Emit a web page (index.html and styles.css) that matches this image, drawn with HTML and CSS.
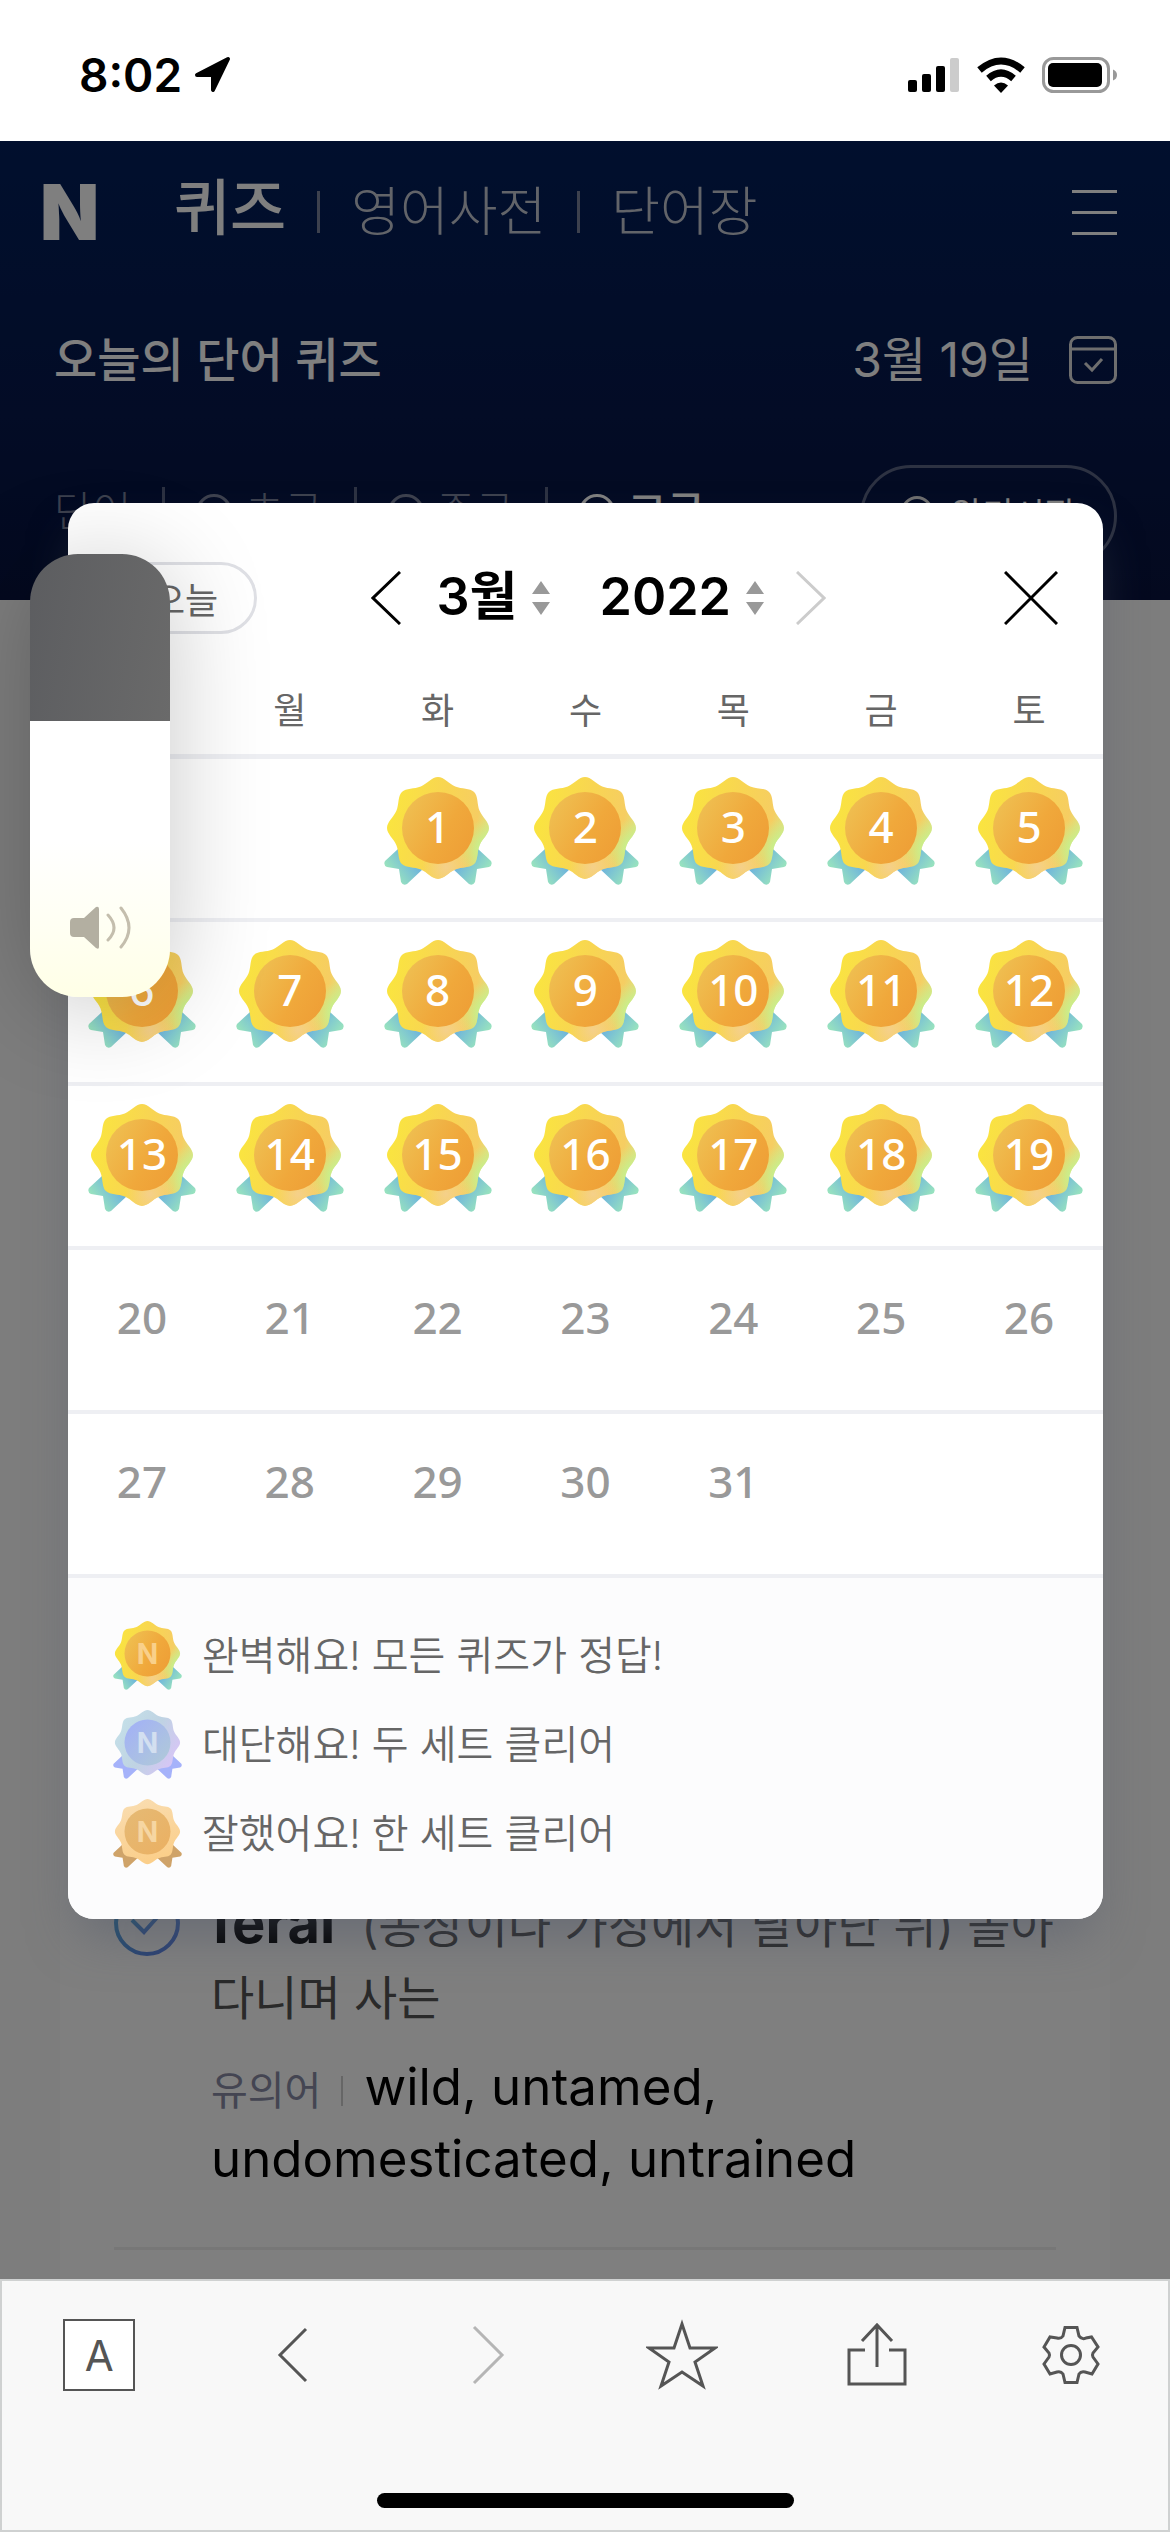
FILE: index.html
```html
<!DOCTYPE html>
<html lang="ko">
<head>
<meta charset="utf-8">
<meta name="viewport" content="width=device-width, initial-scale=1">
<title>오늘의 단어 퀴즈</title>
<link rel="stylesheet" href="styles.css">
</head>
<body>

<svg class="defs" aria-hidden="true">
  <defs>
    <linearGradient id="seal-gold" x1="0" y1="0.4" x2="1" y2="0.6">
      <stop offset="0" stop-color="#fae53f"/>
      <stop offset="0.5" stop-color="#f8d552"/>
      <stop offset="0.85" stop-color="#f6cd62"/>
      <stop offset="1" stop-color="#d9e584"/>
    </linearGradient>
    <radialGradient id="seal-gold-green" gradientUnits="userSpaceOnUse" cx="102" cy="72" r="30">
      <stop offset="0" stop-color="#bff593"/>
      <stop offset="1" stop-color="#bff593" stop-opacity="0"/>
    </radialGradient>
    <radialGradient id="seal-gold-peach" gradientUnits="userSpaceOnUse" cx="62" cy="90" r="24">
      <stop offset="0" stop-color="#f5d08a"/>
      <stop offset="1" stop-color="#f5d08a" stop-opacity="0"/>
    </radialGradient>
    <linearGradient id="disc-gold" x1="0" y1="0.2" x2="1" y2="0.8">
      <stop offset="0" stop-color="#efc052"/>
      <stop offset="0.6" stop-color="#f0a83b"/>
      <stop offset="1" stop-color="#ee9e36"/>
    </linearGradient>
    <linearGradient id="ribbon-gold-l" x1="1" y1="0.2" x2="0.1" y2="0.8">
      <stop offset="0.25" stop-color="#6fb5dc"/>
      <stop offset="0.95" stop-color="#9de8bb"/>
    </linearGradient>
    <linearGradient id="ribbon-gold-r" x1="0" y1="0.2" x2="0.9" y2="0.8">
      <stop offset="0.25" stop-color="#6fb5dc"/>
      <stop offset="0.95" stop-color="#9de8bb"/>
    </linearGradient>
    <linearGradient id="seal-silver" x1="0" y1="0" x2="1" y2="0.6">
      <stop offset="0" stop-color="#c6e3ea"/>
      <stop offset="0.6" stop-color="#bfd3e3"/>
      <stop offset="1" stop-color="#d6c6f5"/>
    </linearGradient>
    <linearGradient id="disc-silver" x1="0" y1="0" x2="1" y2="1">
      <stop offset="0.1" stop-color="#a3b2f5"/>
      <stop offset="0.9" stop-color="#afc8da"/>
    </linearGradient>
    <linearGradient id="seal-bronze" x1="0" y1="0" x2="0.3" y2="1">
      <stop offset="0" stop-color="#f9deb4"/>
      <stop offset="1" stop-color="#fbcf8b"/>
    </linearGradient>
    <linearGradient id="disc-bronze" x1="0" y1="0" x2="1" y2="1">
      <stop offset="0" stop-color="#e5ba75"/>
      <stop offset="1" stop-color="#ebb062"/>
    </linearGradient>
    <linearGradient id="check" x1="0" y1="0" x2="1" y2="1">
      <stop offset="0" stop-color="#3fa8d8"/>
      <stop offset="1" stop-color="#5c7ce8"/>
    </linearGradient>
    <path id="seal" d="M54 0C60 0 64.7 6.7 71.2 9.4C77.7 12.1 85.9 10.7 90.1 14.9C94.3 19.1 92.9 27.3 95.6 33.8C98.3 40.3 105 45 105 51C105 57 98.3 61.7 95.6 68.2C92.9 74.7 94.3 82.9 90.1 87.1C85.9 91.3 77.7 89.9 71.2 92.6C64.7 95.3 60 102 54 102C48 102 43.3 95.3 36.8 92.6C30.3 89.9 22.1 91.3 17.9 87.1C13.7 82.9 15.1 74.7 12.4 68.2C9.7 61.7 3 57 3 51C3 45 9.7 40.3 12.4 33.8C15.1 27.3 13.7 19.1 17.9 14.9C22.1 10.7 30.3 12.1 36.8 9.4C43.3 6.7 48 0 54 0Z"/>
    <path id="ribbon-l" d="M14 72L1 84Q-1 88 3 90L15 92L17 105Q19 109 23 107L39 92L28 76Z"/>
    <path id="ribbon-r" d="M94 72L107 84Q109 88 105 90L93 92L91 105Q89 109 85 107L69 92L80 76Z"/>
    <symbol id="badge-gold" viewBox="0 0 108 108">
      <use href="#ribbon-l" fill="url(#ribbon-gold-l)"/>
      <use href="#ribbon-r" fill="url(#ribbon-gold-r)"/>
      <use href="#seal" fill="url(#seal-gold)"/>
      <use href="#seal" fill="url(#seal-gold-green)"/>
      <use href="#seal" fill="url(#seal-gold-peach)"/>
      <circle cx="54" cy="51" r="36" fill="url(#disc-gold)"/>
    </symbol>
    <symbol id="badge-silver" viewBox="0 0 108 108">
      <use href="#ribbon-l" fill="#a5b2fa"/>
      <use href="#ribbon-r" fill="#a5b2fa"/>
      <use href="#seal" fill="url(#seal-silver)"/>
      <circle cx="54" cy="51" r="36" fill="url(#disc-silver)"/>
    </symbol>
    <symbol id="badge-bronze" viewBox="0 0 108 108">
      <use href="#ribbon-l" fill="#cfa369"/>
      <use href="#ribbon-r" fill="#cfa369"/>
      <use href="#seal" fill="url(#seal-bronze)"/>
      <circle cx="54" cy="51" r="36" fill="url(#disc-bronze)"/>
    </symbol>
    <symbol id="sorter" viewBox="0 0 18 34">
      <path d="M9 0L18 13H0ZM9 34L18 21H0Z" fill="#999"/>
    </symbol>
  </defs>
</svg>

<div class="status-bar">
  <div class="status-left">
    <span class="time">8:02</span>
    <svg width="38" height="38" viewBox="0 0 38 38"><path d="M34 3L19 34V19H3Z" stroke="#000" stroke-width="4" stroke-linejoin="round"/></svg>
  </div>
  <div class="status-right">
    <svg width="52" height="36" viewBox="0 0 52 36">
      <rect x="0" y="23" width="9" height="12" rx="2"/>
      <rect x="14" y="17" width="9" height="18" rx="2"/>
      <rect x="28" y="9" width="9" height="26" rx="2"/>
      <rect x="42" y="1" width="9" height="34" rx="2" fill="#ccc"/>
    </svg>
    <svg width="50" height="36" viewBox="0 0 50 36">
      <path d="M25 36L18 28.500Q25 22.500 32 28.500Z"/>
      <path d="M12.500 21.500Q25 10.500 37.500 21.500M3.500 13Q25 -5 46.500 13" fill="none" stroke="#000" stroke-width="7"/>
    </svg>
    <svg width="76" height="36" viewBox="0 0 76 36">
      <rect x="1.500" y="1.500" width="65" height="33" rx="10" fill="none" stroke="#999" stroke-width="3"/>
      <rect x="6" y="6" width="54" height="24" rx="5"/>
      <path d="M71 12.500Q75 14 75 18T71 23.500Z" fill="#999"/>
    </svg>
  </div>
</div>

<div class="page">
  <header class="header">
    <div class="gnb">
      <a class="logo" href="#">N</a>
      <nav class="gnb-nav">
        <a class="current" href="#">퀴즈</a>
        <a href="#">영어사전</a>
        <a href="#">단어장</a>
      </nav>
      <button class="menu" aria-label="메뉴">
        <svg width="45" height="45" viewBox="0 0 45 45"><path d="M0 1.500H45M0 22.500H45M0 43.500H45" stroke="#fff" stroke-width="3"/></svg>
      </button>
    </div>
    <div class="title-row">
      <h1>오늘의 단어 퀴즈</h1>
      <span class="date">3월 19일</span>
      <button aria-label="달력">
        <svg width="48" height="48" viewBox="0 0 48 48" fill="none" stroke="#ddd" stroke-width="3"><rect x="1.500" y="1.500" width="45" height="45" rx="7"/><path d="M2 13H46M16 27L23 34L33 23"/></svg>
      </button>
    </div>
    <div class="level-row">
      <div class="levels">
        <span>단어</span>
        <label><input type="radio" name="level">초급</label>
        <label><input type="radio" name="level">중급</label>
        <label class="on"><input type="radio" name="level">고급</label>
      </div>
      <button class="memorize"><i></i>암기시작</button>
    </div>
  </header>

  <main class="card">
    <article class="word">
      <svg width="66" height="66" viewBox="0 0 66 66" fill="none" stroke="url(#check)" stroke-width="4"><circle cx="33" cy="33" r="31"/><path d="M18 30L30 42L48 22"/></svg>
      <div class="word-body">
        <p class="mean"><strong>feral</strong>(농장이나 가정에서 달아난 뒤) 돌아다니며 사는</p>
        <p class="synonym"><span>유의어</span>wild, untamed, undomesticated, untrained</p>
      </div>
    </article>
  </main>

  <div class="dimmed"></div>

  <section class="calendar" role="dialog" aria-label="퀴즈 달력">
    <div class="calendar-head">
      <button class="today">오늘</button>
      <div class="picker">
        <button aria-label="이전 달"><svg width="30" height="54" viewBox="0 0 30 54"><path d="M29 1L2 27L29 53" fill="none" stroke="#000" stroke-width="3"/></svg></button>
        <label class="field"><select class="month" aria-label="월"><option>3월</option></select><svg width="18" height="34"><use href="#sorter"/></svg></label>
        <label class="field"><select class="year" aria-label="연도"><option>2022</option></select><svg width="18" height="34"><use href="#sorter"/></svg></label>
        <button aria-label="다음 달"><svg width="30" height="54" viewBox="0 0 30 54"><path d="M1 1L28 27L1 53" fill="none" stroke="#ccc" stroke-width="3"/></svg></button>
      </div>
      <button class="close" aria-label="닫기"><svg width="54" height="54" viewBox="0 0 54 54"><path d="M1 1L53 53M53 1L1 53" stroke="#000" stroke-width="3"/></svg></button>
    </div>

    <table class="month-table">
      <thead>
        <tr><th>일</th><th>월</th><th>화</th><th>수</th><th>목</th><th>금</th><th>토</th></tr>
      </thead>
      <tbody>
        <tr>
          <td></td>
          <td></td>
          <td><div class="day"><svg><use href="#badge-gold"/></svg><span>1</span></div></td>
          <td><div class="day"><svg><use href="#badge-gold"/></svg><span>2</span></div></td>
          <td><div class="day"><svg><use href="#badge-gold"/></svg><span>3</span></div></td>
          <td><div class="day"><svg><use href="#badge-gold"/></svg><span>4</span></div></td>
          <td><div class="day"><svg><use href="#badge-gold"/></svg><span>5</span></div></td>
        </tr>
        <tr>
          <td><div class="day"><svg><use href="#badge-gold"/></svg><span>6</span></div></td>
          <td><div class="day"><svg><use href="#badge-gold"/></svg><span>7</span></div></td>
          <td><div class="day"><svg><use href="#badge-gold"/></svg><span>8</span></div></td>
          <td><div class="day"><svg><use href="#badge-gold"/></svg><span>9</span></div></td>
          <td><div class="day"><svg><use href="#badge-gold"/></svg><span>10</span></div></td>
          <td><div class="day"><svg><use href="#badge-gold"/></svg><span>11</span></div></td>
          <td><div class="day"><svg><use href="#badge-gold"/></svg><span>12</span></div></td>
        </tr>
        <tr>
          <td><div class="day"><svg><use href="#badge-gold"/></svg><span>13</span></div></td>
          <td><div class="day"><svg><use href="#badge-gold"/></svg><span>14</span></div></td>
          <td><div class="day"><svg><use href="#badge-gold"/></svg><span>15</span></div></td>
          <td><div class="day"><svg><use href="#badge-gold"/></svg><span>16</span></div></td>
          <td><div class="day"><svg><use href="#badge-gold"/></svg><span>17</span></div></td>
          <td><div class="day"><svg><use href="#badge-gold"/></svg><span>18</span></div></td>
          <td><div class="day"><svg><use href="#badge-gold"/></svg><span>19</span></div></td>
        </tr>
        <tr class="future">
          <td><div class="day"><span>20</span></div></td>
          <td><div class="day"><span>21</span></div></td>
          <td><div class="day"><span>22</span></div></td>
          <td><div class="day"><span>23</span></div></td>
          <td><div class="day"><span>24</span></div></td>
          <td><div class="day"><span>25</span></div></td>
          <td><div class="day"><span>26</span></div></td>
        </tr>
        <tr class="future">
          <td><div class="day"><span>27</span></div></td>
          <td><div class="day"><span>28</span></div></td>
          <td><div class="day"><span>29</span></div></td>
          <td><div class="day"><span>30</span></div></td>
          <td><div class="day"><span>31</span></div></td>
          <td></td>
          <td></td>
        </tr>
      </tbody>
    </table>

    <ul class="legend">
      <li><svg viewBox="0 0 108 108"><use href="#badge-gold"/><text x="54" y="67" fill="#f9d08a">N</text></svg>완벽해요! 모든 퀴즈가 정답!</li>
      <li><svg viewBox="0 0 108 108"><use href="#badge-silver"/><text x="54" y="67" fill="#d3dff0">N</text></svg>대단해요! 두 세트 클리어</li>
      <li><svg viewBox="0 0 108 108"><use href="#badge-bronze"/><text x="54" y="67" fill="#f6d6a2">N</text></svg>잘했어요! 한 세트 클리어</li>
    </ul>
  </section>

  <div class="volume">
    <input type="range" min="0" max="100" value="62" aria-label="음량">
    <svg width="62" height="44" viewBox="0 0 62 44">
      <path d="M4 12H14L26 1Q29 0 29 3V41Q29 44 26 42L14 31H4Q0 31 0 27V16Q0 12 4 12Z" fill="#b3afa1"/>
      <path d="M38 9Q50 22 38 34M51 2Q67 22 51 41" fill="none" stroke="#c4bead" stroke-width="3" stroke-linecap="round"/>
    </svg>
  </div>
</div>

<footer class="toolbar">
  <div class="tools">
    <button class="reader" aria-label="보기 설정">A</button>
    <button aria-label="뒤로"><svg width="72" height="72" viewBox="0 0 72 72"><path d="M49 10L23 36L49 62"/></svg></button>
    <button aria-label="앞으로" class="off"><svg width="72" height="72" viewBox="0 0 72 72"><path d="M22 8L50 36L22 64"/></svg></button>
    <button aria-label="즐겨찾기"><svg width="72" height="72" viewBox="0 0 72 72"><path d="M36 5L44 29H69L49 43L57 67L36 53L15 67L23 43L3 29H28Z"/></svg></button>
    <button aria-label="공유"><svg width="72" height="72" viewBox="0 0 72 72"><path d="M25 31H9V65H65V31H49M37 48V6M22 22L37 6L52 22"/></svg></button>
    <button aria-label="설정"><svg width="72" height="72" viewBox="0 0 72 72"><circle cx="36" cy="36" r="9.500"/><path d="M30 8.500H42L44 17Q47 21 51 19L56.500 18L63 28L58 34Q57 36 58 38L63 45L57 55L50 53Q46 52 44 55L42 63.500H30L28 55Q26 52 22 53L15 55L9 45L14 38Q15 36 14 34L9 28L15 18L22 19Q26 20 28 17Z"/></svg></button>
  </div>
  <div class="home-indicator"></div>
</footer>

</body>
</html>
```
FILE: styles.css
```css
* {
  box-sizing: border-box;
}

body {
  display: flex;
  flex-direction: column;
  min-height: 100vh;
  margin: 0;
  background: #fff;
  color: #000;
  font-family: Inter, "Noto Sans CJK KR", sans-serif;
}

h1, p, ul {
  margin: 0;
  padding: 0;
}

a {
  color: inherit;
  text-decoration: none;
}

button {
  padding: 0;
  border: 0;
  background: none;
  color: inherit;
  font: inherit;
}

svg {
  display: block;
  flex: none;
}

.defs {
  position: absolute;
  width: 0;
  height: 0;
}

/* status bar */
.status-bar {
  display: flex;
  align-items: center;
  justify-content: space-between;
  height: 141px;
  padding: 8px 52px 0 79px;
}

.status-left {
  display: flex;
  align-items: center;
  gap: 12px;
}

.time {
  font-size: 46px;
  font-weight: 600;
  line-height: 56px;
}

.status-right {
  display: flex;
  align-items: center;
  gap: 16px;
}

/* page header */
.page {
  position: relative;
  flex: 1;
  overflow: hidden;
  background: #fbfbfb;
}

.header {
  height: 459px;
  padding: 0 53px 0 54px;
  background: linear-gradient(#021f5c, #06184c 60%, #08133e);
  color: #fff;
}

.gnb {
  display: flex;
  align-items: center;
  height: 142px;
}

.logo {
  width: 120px;
  margin-left: -14px;
  font-size: 77px;
  font-weight: 900;
  line-height: 142px;
}

.gnb-nav {
  display: flex;
  flex: 1;
  align-items: center;
  color: #c4c8d2;
  font-size: 53px;
  font-weight: 300;
}

.gnb-nav a {
  display: flex;
  align-items: center;
  line-height: 76px;
}

.gnb-nav a + a::before {
  width: 3px;
  height: 42px;
  margin: 0 31px;
  background: #7a829c;
  content: "";
}

.gnb-nav .current {
  margin-left: 14px;
  padding-bottom: 8px;
  color: #fff;
  font-size: 61px;
  font-weight: 500;
}

.title-row {
  display: flex;
  align-items: center;
  height: 154px;
}

.title-row h1 {
  flex: 1;
  font-size: 47px;
  font-weight: 500;
  line-height: 70px;
}

.date {
  margin-right: 36px;
  font-size: 48px;
  font-weight: 400;
  line-height: 70px;
}

.level-row {
  display: flex;
  align-items: center;
  justify-content: space-between;
  height: 158px;
}

.levels {
  display: flex;
  align-items: center;
  padding-bottom: 8px;
  color: #7a829c;
  font-size: 42px;
  font-weight: 300;
  line-height: 60px;
}

.levels label {
  display: flex;
  align-items: center;
}

.levels label::before {
  width: 3px;
  height: 50px;
  margin: 0 31px;
  background: #5a6484;
  content: "";
}

.levels input {
  width: 36px;
  height: 36px;
  margin: 0 13px 0 0;
  border: 3px solid currentColor;
  border-radius: 50%;
  color: inherit;
  appearance: none;
}

.levels .on {
  color: #fff;
  font-weight: 500;
}

.memorize {
  display: flex;
  align-items: center;
  justify-content: center;
  width: 257px;
  height: 102px;
  padding-bottom: 8px;
  border: 3px solid #5a6484;
  border-radius: 51px;
  color: #fff;
  font-size: 34px;
}

.memorize i {
  width: 32px;
  height: 32px;
  margin-right: 18px;
  border: 3px solid #ddd;
  border-radius: 50%;
}

/* word card */
.card {
  margin: 840px 60px 0;
  padding: 450px 54px 29px;
  background: #fff;
}

.word {
  display: flex;
  height: 360px;
  border-bottom: 3px solid #efefef;
}

.word-body {
  flex: 1;
  padding-left: 31px;
}

.mean {
  color: #555;
  font-size: 47px;
  line-height: 72px;
}

.mean strong {
  margin-right: 26px;
  color: #000;
  font-size: 56px;
  font-weight: 700;
  line-height: 56px;
}

.synonym {
  margin-top: 17px;
  font-size: 51px;
  line-height: 72px;
}

.synonym span {
  margin-right: 21px;
  padding-right: 22px;
  background: linear-gradient(#ccc, #ccc) right center / 2px 30px no-repeat;
  color: #888ba5;
  font-size: 40px;
  line-height: 40px;
}

/* calendar layer */
.dimmed {
  position: absolute;
  inset: 0;
  background: rgba(0, 0, 0, 0.5);
}

.calendar {
  position: absolute;
  top: 362px;
  right: 67px;
  left: 68px;
  border-radius: 26px;
  background: #fff;
  box-shadow: 0 26px 50px -12px rgba(80, 88, 105, 0.5);
}

.calendar-head {
  display: grid;
  grid-template-columns: 1fr auto 1fr;
  align-items: center;
  padding: 58px 45px 0;
}

.today {
  justify-self: start;
  width: 144px;
  height: 72px;
  border: 3px solid #dfe0e5;
  border-radius: 36px;
  color: #666;
  font-size: 36px;
}

.picker {
  display: flex;
  align-items: center;
  margin-left: 25px;
}

.field {
  display: flex;
  align-items: center;
  margin-left: 36px;
}

.field + .field {
  margin-left: 50px;
}

.field + button {
  margin-left: 32px;
}

.field select {
  margin: 0;
  padding: 0 14px 2px 0;
  border: 0;
  background: none;
  color: #000;
  font-family: inherit;
  font-size: 52px;
  font-weight: 600;
  line-height: 72px;
  appearance: none;
}

.close {
  justify-self: end;
}

.month-table {
  width: 100%;
  margin-top: 37px;
  border-collapse: collapse;
  table-layout: fixed;
}

.month-table th {
  height: 84px;
  padding: 0 0 4px;
  border-bottom: 5px solid #eeeff3;
  color: #666;
  font-size: 36px;
  font-weight: 400;
  line-height: 52px;
}

.month-table td {
  height: 164px;
  padding: 18px 0 0;
  border-bottom: 4px solid #eeeff3;
  vertical-align: top;
}

.day {
  display: grid;
  justify-items: center;
  color: #fff;
  font-family: "Noto Sans", sans-serif;
  font-size: 44px;
  font-weight: 500;
  line-height: 98px;
}

.day svg,
.day span {
  grid-area: 1 / 1;
}

.day svg {
  width: 108px;
  height: 108px;
}

.future .day {
  color: #999;
}

.legend {
  display: flex;
  flex-direction: column;
  gap: 20px;
  padding: 43px 45px 51px;
  border-radius: 0 0 26px 26px;
  background: #fcfcfd;
  list-style: none;
}

.legend li {
  display: flex;
  align-items: center;
  color: #666;
  font-size: 40px;
  font-weight: 350;
  line-height: 69px;
}

.legend svg {
  width: 69px;
  height: 69px;
  margin-right: 20px;
}

.legend text {
  font-family: Inter, sans-serif;
  font-size: 44px;
  font-weight: 700;
  text-anchor: middle;
}

/* volume */
.volume {
  position: absolute;
  top: 413px;
  left: 30px;
  width: 140px;
  height: 443px;
  border-radius: 48px;
  box-shadow: 0 10px 100px rgba(0, 0, 0, 0.22);
}

.volume input {
  width: 140px;
  height: 443px;
  margin: 0;
  border-radius: 48px;
  background:
    linear-gradient(100deg, #5c5d60, #6a6a6a) top / 100% 167px no-repeat,
    linear-gradient(#fff 65%, #fffff2 85%, #ffffe6);
  appearance: none;
  writing-mode: vertical-lr;
  direction: rtl;
}

.volume input::-webkit-slider-thumb {
  width: 140px;
  height: 1px;
  background: none;
  appearance: none;
}

.volume svg {
  position: absolute;
  bottom: 47px;
  left: 40px;
}

/* browser toolbar */
.toolbar {
  height: 253px;
  padding-top: 38px;
  border: 2px solid #cfd1d1;
  background: #f8f8f8;
}

.tools {
  display: grid;
  grid-template-columns: repeat(6, 1fr);
  justify-items: center;
}

.tools svg {
  fill: none;
  stroke: #555;
  stroke-width: 3;
}

.tools .off svg {
  stroke: #b5b5b5;
}

.reader {
  width: 72px;
  height: 72px;
  border: 2px solid #555;
  background: #fff;
  color: #555;
  font-size: 42px;
}

.home-indicator {
  width: 417px;
  height: 15px;
  margin: 102px auto 0;
  border-radius: 8px;
  background: #000;
}
```
